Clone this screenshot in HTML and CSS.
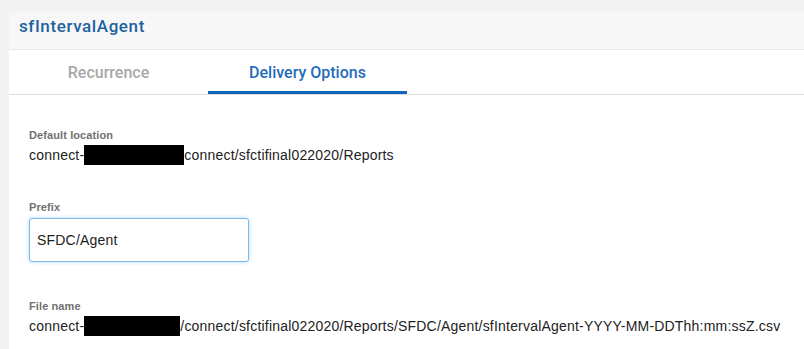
FILE: index.html
```html
<!DOCTYPE html>
<html lang="en">
<head>
    <meta charset="UTF-8">
    <meta name="viewport" content="width=device-width, initial-scale=1.0">
    <title>sfIntervalAgent</title>
    <link rel="stylesheet" href="styles.css">
</head>
<body>

<div class="page">
    <div class="panel">
        <div class="panel-header">
            <h2>sfIntervalAgent</h2>
        </div>
        <div class="tabs">
            <div class="tab">Recurrence</div>
            <div class="tab active">Delivery Options</div>
        </div>

        <div class="content">
            <div class="field">
                <div class="label">Default location</div>
                <div class="value">connect-<span class="redact redact-1"></span>connect/sfctifinal022020/Reports</div>
            </div>
            <div class="field">
                <div class="label">Prefix</div>
                <input type="text" class="text-input" value="SFDC/Agent">
            </div>
            <div class="field field-file">
                <div class="label">File name</div>
                <div class="value">connect-<span class="redact redact-2"></span>/connect/sfctifinal022020/Reports/SFDC/Agent/sfIntervalAgent-YYYY-MM-DDThh:mm:ssZ.csv</div>
            </div>
        </div>
    </div>
</div>

</body>
</html>
```

FILE: styles.css
```css
body {
    font-family: "Liberation Sans", Arial, sans-serif;
    margin: 0;
    background-color: #f2f2f2;
    color: #232f3e;
}
.page {
    padding: 12px 0 0 9px;
}
.panel {
    background-color: #fff;
    min-height: 337px;
}
.panel-header {
    background-color: #f7f7f7;
    height: 37px;
    padding: 0 10px;
    border-bottom: 1px solid #e9e9e9;
}
.panel-header h2 {
    margin: 0;
    padding-top: 2px;
    font-family: Roboto, "Liberation Sans", Arial, sans-serif;
    font-size: 17px;
    line-height: 24px;
    font-weight: 500;
    color: #1d62a0;
    letter-spacing: 0.6px;
}
.tabs {
    display: flex;
    border-bottom: 1px solid #dcdcdc;
}
.tab {
    width: 199px;
    height: 41px;
    line-height: 46px;
    text-align: center;
    font-family: Roboto, "Liberation Sans", Arial, sans-serif;
    font-size: 16px;
    font-weight: 500;
    color: #a8a8a8;
    border-bottom: 3px solid transparent;
}
.tab.active {
    color: #1f6cbb;
    border-bottom-color: #1166bb;
}
.content {
    padding: 34px 20px 0 20px;
}
.field {
    margin-bottom: 36px;
}
.field-file {
    padding-top: 2px;
}
.label {
    font-size: 11px;
    line-height: 13px;
    font-weight: bold;
    color: #707070;
    margin-bottom: 3px;
    letter-spacing: 0.1px;
}
.value {
    font-size: 14px;
    color: #222;
    line-height: 20px;
    letter-spacing: 0.2px;
    white-space: nowrap;
}
.redact {
    display: inline-block;
    background-color: #000;
    height: 20px;
    vertical-align: top;
}
.redact-1 {
    width: 100px;
}
.redact-2 {
    width: 96px;
}
.text-input {
    box-sizing: border-box;
    width: 220px;
    height: 44px;
    margin-top: 1px;
    padding: 0 7px;
    font-family: "Liberation Sans", Arial, sans-serif;
    font-size: 14px;
    color: #222;
    letter-spacing: 0.2px;
    border: 1px solid #7bb8ef;
    border-radius: 3px;
    box-shadow: 0 0 4px #b7d9f8;
    outline: none;
}
```
